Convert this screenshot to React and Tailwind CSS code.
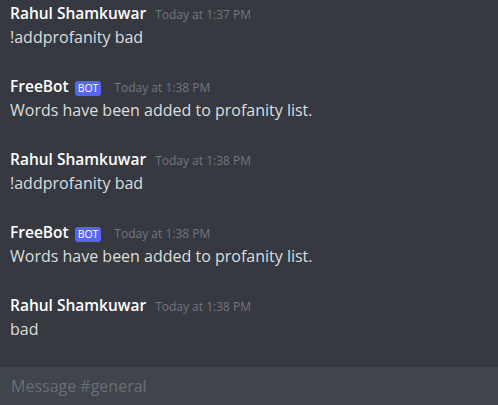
const messages = [
  { author: "Rahul Shamkuwar", bot: false, time: "Today at 1:37 PM", text: "!addprofanity bad" },
  { author: "FreeBot", bot: true, time: "Today at 1:38 PM", text: "Words have been added to profanity list." },
  { author: "Rahul Shamkuwar", bot: false, time: "Today at 1:38 PM", text: "!addprofanity bad" },
  { author: "FreeBot", bot: true, time: "Today at 1:38 PM", text: "Words have been added to profanity list." },
  { author: "Rahul Shamkuwar", bot: false, time: "Today at 1:38 PM", text: "bad" },
];

function Message({ author, bot, time, text }) {
  return (
    <div className="h-[73px]">
      <div className="flex items-baseline h-[24px]">
        <span className="text-[15.5px] font-semibold text-white">{author}</span>
        {bot && (
          <span className="ml-[6px] mr-[4px] px-[3px] h-[15px] self-center mt-[2px] rounded-[3px] bg-[#5865f2] text-white text-[10.5px] leading-[15px] font-medium">
            BOT
          </span>
        )}
        <span className="ml-[9px] text-[12px] text-[#72767d]">{time}</span>
      </div>
      <div className="text-[16px] leading-[22px] text-[#dcddde]">{text}</div>
    </div>
  );
}

export default function App() {
  return (
    <div
      className="w-[498px] h-[405px] bg-[#36393f] flex flex-col overflow-hidden"
      style={{ fontFamily: '"Open Sans", "Noto Sans", sans-serif' }}
    >
      <div className="flex-1 pl-[10px] pt-[2px]">
        {messages.map((m, i) => (
          <Message key={i} {...m} />
        ))}
      </div>
      <div className="h-[38px] bg-[#40444b] flex items-center pl-[11px]">
        <span className="text-[16px] text-[#6a6e75]">Message #general</span>
      </div>
    </div>
  );
}
